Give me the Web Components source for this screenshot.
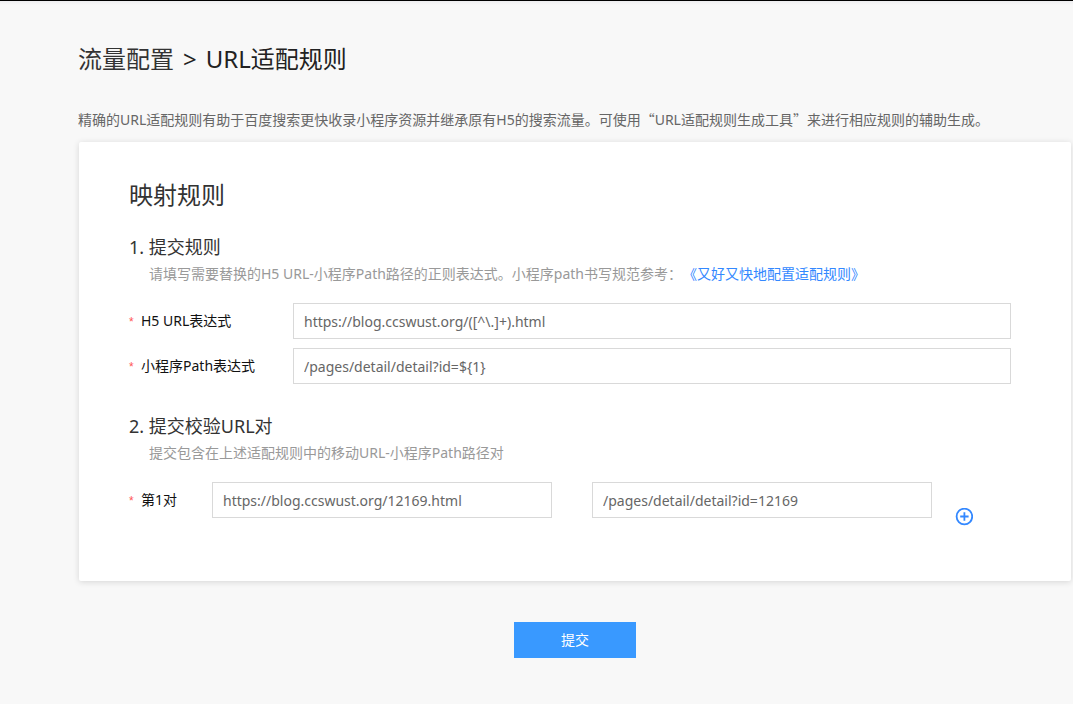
<!DOCTYPE html>
<html lang="zh-CN">
<head>
<meta charset="utf-8">
<meta name="viewport" content="width=device-width, initial-scale=1">
<title>URL适配规则</title>
<style>
  body {
    margin: 0;
    background: #f8f8f8;
    font: 14px/20px "Noto Sans", "Noto Sans CJK SC", sans-serif;
    color: #333;
  }
</style>
</head>
<body>
<rule-page></rule-page>

<template id="rule-page">
  <style>
    :host { display: block; min-height: 100vh; box-sizing: border-box; border-top: 1px solid #000; background: linear-gradient(#eeeef0, #f8f8f8 4px); padding: 42px 1px 46px 78px; }
    h1 { margin: 0; font-size: 24px; line-height: 32px; font-weight: 400; color: #222; display: flex; gap: 9px; }
    h1 a { color: #333; text-decoration: none; }
    .intro { margin: 34px 0 12px; color: #666; }
    .q { font-family: "Noto Sans CJK SC", sans-serif; }
    .link { margin-left: 8px; color: #3388ff; text-decoration: none; }
    .actions { display: flex; justify-content: center; margin-top: 41px; }
  </style>
  <h1><a href="#">流量配置</a><span>&gt;</span><span>URL适配规则</span></h1>
  <p class="intro">精确的URL适配规则有助于百度搜索更快收录小程序资源并继承原有H5的搜索流量。可使用<span class="q">“</span>URL适配规则生成工具<span class="q">”</span>来进行相应规则的辅助生成。</p>
  <form-card>
    <span slot="title">映射规则</span>
    <form-step>
      <span slot="title">1. 提交规则</span>
      <span slot="hint">请填写需要替换的H5 URL-小程序Path路径的正则表达式。小程序path书写规范参考：<a class="link" href="#">《又好又快地配置适配规则》</a></span>
      <rule-field label="H5 URL表达式" value="https://blog.ccswust.org/([^\.]+).html"></rule-field>
      <rule-field label="小程序Path表达式" value="/pages/detail/detail?id=${1}"></rule-field>
    </form-step>
    <form-step>
      <span slot="title">2. 提交校验URL对</span>
      <span slot="hint">提交包含在上述适配规则中的移动URL-小程序Path路径对</span>
      <pair-field label="第1对" url="https://blog.ccswust.org/12169.html" path="/pages/detail/detail?id=12169"></pair-field>
    </form-step>
  </form-card>
  <div class="actions"><submit-button>提交</submit-button></div>
</template>

<template id="form-card">
  <style>
    :host { display: block; margin: 0 1px; padding: 37px 60px 63px 50px; background: #fff; border-radius: 2px; box-shadow: 0 1px 6px rgba(0, 0, 0, .14); }
    h2 { margin: 0 0 22px; font-size: 24px; line-height: 32px; font-weight: 400; }
    .steps { display: grid; gap: 28px; }
  </style>
  <h2><slot name="title"></slot></h2>
  <div class="steps"><slot></slot></div>
</template>

<template id="form-step">
  <style>
    :host { display: block; }
    h3 { margin: 0; font-size: 18px; line-height: 28px; font-weight: 400; }
    p { margin: 3px 0 19px 20px; color: #999; }
    .rows { display: grid; gap: 9px; }
  </style>
  <h3><slot name="title"></slot></h3>
  <p><slot name="hint"></slot></p>
  <div class="rows"><slot></slot></div>
</template>

<template id="rule-field">
  <style>
    :host { display: flex; align-items: center; }
    label { flex: 0 0 164px; color: #111; }
    label::before { content: "*"; color: #f55; font-family: "Liberation Sans", sans-serif; font-size: 12px; display: inline-block; width: 12px; }
    input { flex: 1; min-width: 0; height: 36px; box-sizing: border-box; padding: 0 10px; border: 1px solid #d9d9d9; background: #fff; color: #666; font: inherit; }
    input:focus { outline: none; border-color: #3999ff; }
  </style>
  <label for="field"></label>
  <input id="field" type="text">
</template>

<template id="pair-field">
  <style>
    :host { display: flex; align-items: center; }
    label { flex: 0 0 83px; color: #111; }
    label::before { content: "*"; color: #f55; font-family: "Liberation Sans", sans-serif; font-size: 12px; display: inline-block; width: 12px; }
    .pair { flex: 1; min-width: 0; display: grid; grid-template-columns: 1fr 1fr; gap: 40px; }
    input { width: 100%; height: 36px; box-sizing: border-box; padding: 0 10px; border: 1px solid #d9d9d9; background: #fff; color: #666; font: inherit; }
    input:focus { outline: none; border-color: #3999ff; }
    .tools { flex: 0 0 56px; height: 10px; align-self: flex-end; margin-left: 23px; display: flex; }
    button { display: block; height: 18px; padding: 0; border: 0; background: none; color: #3388ff; cursor: pointer; }
    svg { display: block; }
  </style>
  <label for="url"></label>
  <div class="pair">
    <input id="url" type="text">
    <input id="path" type="text" aria-label="小程序Path">
  </div>
  <div class="tools">
    <button type="button" aria-label="添加">
      <svg width="18" height="18" viewBox="0 0 18 18" fill="none" stroke="currentColor" stroke-width="1.8"><circle cx="9.4" cy="8.5" r="7.8"/><path d="M9.4 4.3v8.4M5.2 8.5h8.4"/></svg>
    </button>
  </div>
</template>

<template id="submit-button">
  <style>
    :host { display: block; }
    button { display: block; width: 122px; height: 36px; padding: 0; border: 0; background: #3999ff; color: #fff; font: inherit; cursor: pointer; }
  </style>
  <button type="submit"><slot></slot></button>
</template>

<script>
  class TemplateElement extends HTMLElement {
    constructor() {
      super();
      const template = document.getElementById(this.localName);
      this.attachShadow({ mode: "open" }).append(template.content.cloneNode(true));
    }
  }

  class RuleField extends TemplateElement {
    connectedCallback() {
      this.shadowRoot.querySelector("label").textContent = this.getAttribute("label");
      this.shadowRoot.getElementById("field").value = this.getAttribute("value");
    }
  }

  class PairField extends TemplateElement {
    connectedCallback() {
      this.shadowRoot.querySelector("label").textContent = this.getAttribute("label");
      this.shadowRoot.getElementById("url").value = this.getAttribute("url");
      this.shadowRoot.getElementById("path").value = this.getAttribute("path");
    }
  }

  customElements.define("rule-field", RuleField);
  customElements.define("pair-field", PairField);
  customElements.define("submit-button", class extends TemplateElement {});
  customElements.define("form-step", class extends TemplateElement {});
  customElements.define("form-card", class extends TemplateElement {});
  customElements.define("rule-page", class extends TemplateElement {});
</script>
</body>
</html>
